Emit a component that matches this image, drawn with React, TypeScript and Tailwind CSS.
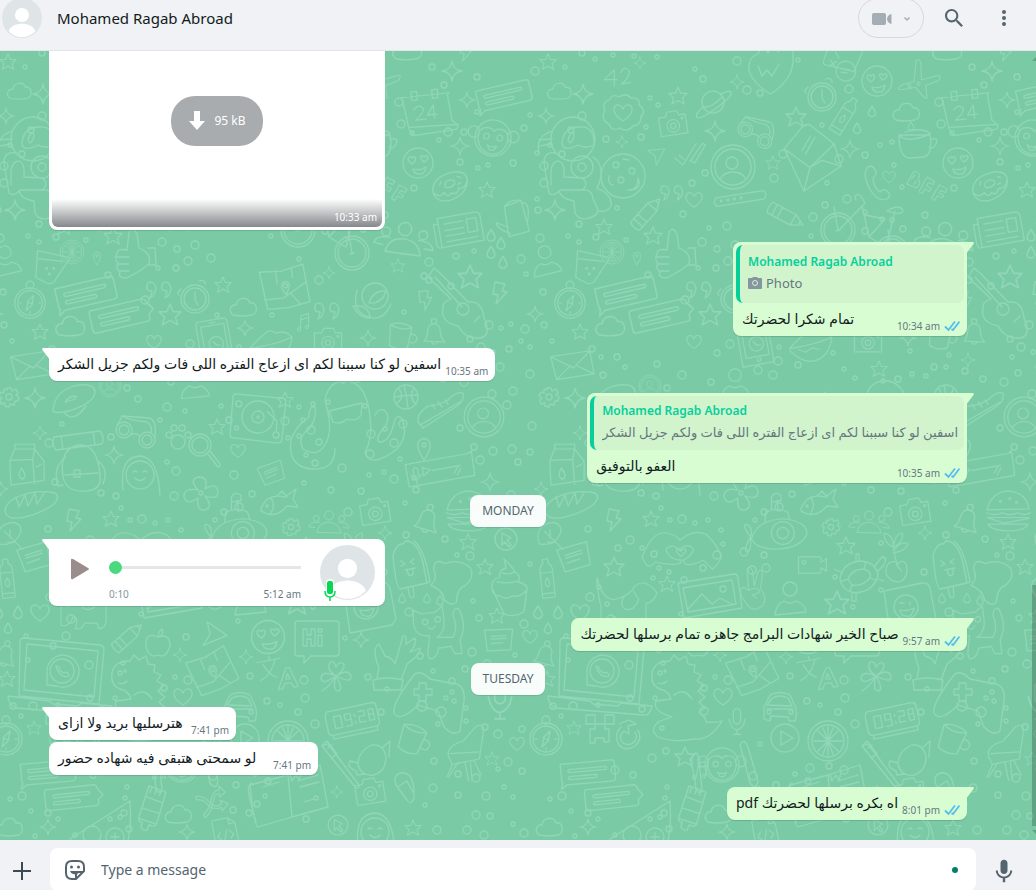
import { useId } from "react";
import type { ReactNode } from "react";
import clsx from "clsx";

const circle = (x: number, y: number, r: number) =>
  `M${x - r} ${y}a${r} ${r} 0 1 0 ${r * 2} 0a${r} ${r} 0 1 0 ${-r * 2} 0`;

const star = "M0 -10L3 -3L10 -3L5 2L7 9L0 5L-7 9L-5 2L-10 -3L-3 -3Z";
const heart = "M0 8C-14 -1 -9 -9 -4 -8C-1 -7 0 -4 0 -4C0 -4 1 -7 4 -8C9 -9 14 -1 0 8Z";

const shapes: Record<string, string> = {
  star,
  heart,
  sparkle: "M0 -10Q1 -1 10 0Q1 1 0 10Q-1 1 -10 0Q-1 -1 0 -10Z",
  cloud: "M-11 8C-17 3 -12 -3 -8 -2C-7 -10 4 -11 6 -4C13 -6 15 6 8 8Q-2 10 -11 8Z",
  drop: "M0 -5Q5 2 3 4Q0 7 -3 4Q-5 2 0 -5Z",
  bolt: "M-4 -11L6 -9L3 -2L8 -1L-3 11L-1 2L-6 1Z",
  bubble:
    "M-27 -10L24 -10Q27 -10 27 -7L27 8Q27 11 24 11L-22 11L-28 15L-26 9L-27 8ZM-19 -4L18 -4Q20 -3 18 -1L-19 -1Q-21 -3 -19 -4ZM-19 3L8 3Q10 5 8 6L-19 6Q-21 4 -19 3Z",
  bubbleRight:
    "M-27 -10L22 -10Q25 -9 25 -6L30 1L25 5L25 8Q25 11 22 11L-25 11Q-28 11 -28 8L-28 -7ZM-19 -4L16 -4Q18 -3 16 -1L-19 -1Q-21 -3 -19 -4ZM-19 3L6 3Q8 5 6 6L-19 6Q-21 4 -19 3Z",
  note: "M-16 -11L15 -12L13 11L-13 12L-16 -11M-9 -4L8 -5M-9 -1L8 -2M-9 4L4 3",
  smiley:
    circle(0, 0, 15) +
    "M-6 1C-13 -4 -9 -8 -6 -5C-3 -9 0 -4 -6 1ZM6 -1C0 -6 3 -9 6 -6C9 -10 13 -5 6 -1ZM-5 6Q2 8 8 4Q7 12 1 11Q-4 11 -5 6Z",
  calendar:
    "M-28 -17L22 -17L20 -15L22 12L28 18L26 22L-20 24L-24 16ZM-23 15L27 17M-18 -22H-12V-13H-18ZM4 -22H10V-13H4ZM-17 -3Q-12 -9 -7 -4Q-5 0 -16 8L-5 8M4 8V-6L-3 4H7",
  monkey:
    circle(0, 0, 19) +
    circle(-21, -4, 6) +
    circle(21, -4, 6) +
    circle(-7, -1, 3) +
    circle(7, -1, 3) +
    "M-15 5Q-18 -9 -8 -10Q-2 -11 0 -7Q2 -11 8 -10Q18 -9 15 5Q11 17 0 17Q-11 17 -15 5ZM-5 8Q0 11 5 8Q3 14 -2 13Z",
  astronaut:
    circle(0, -38, 22) +
    circle(9, -10, 11) +
    circle(9, -10, 4) +
    "M-11 -35Q-9 -49 5 -50Q22 -52 21 -32Q13 -28 5 -32Q-11 -24 -11 -35ZM-5 -37Q-2 -47 1 -43Q1 -37 -3 -34ZM-17 -24Q-29 -26 -29 -14L-24 16Q-20 20 -14 14Q-12 22 1 24L2 36Q6 44 16 41Q27 38 24 30L20 22Q19 12 10 13L-13 13M-22 8V-6Q-21 -16 -14 -16Q-8 -14 -9 0L9 1Q17 7 9 13M20 -20Q34 -10 24 11Q40 18 38 29Q34 36 25 34M-21 -46Q-38 -40 -34 -24M-21 -38L-34 -37M-22 -33L-34 -31",
  planet: circle(0, 0, 11) + "M-10 4Q-20 11 -17 14Q-13 17 8 3Q22 -6 18 -9Q15 -10 8 -7M-10 4Q-1 6 10 -5",
  ball:
    circle(0, 0, 22) +
    circle(-2, 4, 3) +
    circle(9, -5, 3) +
    circle(-7, -11, 3) +
    "M5 14Q15 15 15 2Q20 14 5 14ZM-14 0Q-16 8 -10 9M0 -17L6 -16",
  envelope: "M-26 -12L-5 -30Q2 -34 5 -29L24 -8L27 15L-14 33ZM-26 -12L-4 11L24 -8M-14 33L-4 11L9 6L27 15M-6 -3L6 -18M-9 -7L2 -20",
  glasses:
    circle(-13, 0, 8) +
    circle(10, 10, 8) +
    circle(-13, 0, 5) +
    circle(10, 10, 5) +
    "M-7 5Q-2 2 3 6M-20 -4L-15 -14L12 -12Q20 -10 18 7M-15 -14Q-9 -10 10 -8Q16 -4 14 3",
  userCircle: circle(0, 0, 22) + circle(0, 0, 18) + circle(-1, -4, 6) + "M-13 12Q-9 5 0 5Q9 5 13 12",
  user: circle(0, -11, 7) + "M-15 15Q-14 4 -6 1Q0 5 6 1Q15 4 16 12Z",
  people:
    circle(0, -10, 6) +
    circle(-17, -6, 4) +
    circle(17, -6, 4) +
    "M-16 12Q-14 -1 0 -1Q14 0 16 13ZM-19 6L-27 5Q-26 -2 -13 -1M19 6L27 7Q26 -1 13 -1",
  toggle: "M-25 -4H25Q30 0 25 5H-25Q-30 0 -25 -4Z" + circle(-20, 0, 1) + circle(-13, 0, 1) + circle(-6, 0, 1) + circle(1, 0, 1),
  pencil: "M-18 -6H8L19 0L8 6H-18Q-21 0 -18 -6ZM-13 -6V6M-7 -6V6M8 -6V6M15 -2V2",
  clock: circle(0, 0, 14) + circle(0, 0, 11) + "M0 -7V1L3 6M-14 -10Q-19 -6 -16 -4M4 -18Q10 -20 10 -15",
  bottle: "M-7 22V-8Q-7 -14 -3 -16V-21H3V-16Q7 -14 7 -8V22ZM-7 -6H7M-7 17H7M0 0Q5 7 0 10Q-5 7 0 0Z",
  plane: "M-19 14Q-20 9 -1 2L-2 -24Q0 -28 4 -23L8 -1L24 -8Q34 -13 29 -3L14 5L18 20Q16 23 2 9Q-18 16 -19 14Z" + circle(-6, 8, 2) + circle(5, 4, 2),
  cup: "M-18 -9Q-18 14 -7 14L7 13Q16 10 13 -9ZM-18 -9Q-14 -4 -3 -5Q12 -8 13 -11Q4 -17 -12 -12M14 -5Q22 -7 19 0Q16 6 12 3",
  donut: "M-18 1Q-15 -13 6 -13Q20 -12 18 -1Q14 12 -3 14Q-18 14 -18 1ZM-17 4Q-12 10 -7 5Q-5 12 0 7Q5 11 8 4Q15 6 18 -2M-5 0Q-6 -5 1 -6Q7 -5 5 -1Q0 3 -5 0ZM-10 -3L-8 -6M9 -8L12 -6M8 0L11 -1",
  handset: "M-10 -14Q-6 -18 -3 -14Q2 -8 -4 -4Q-4 5 3 10Q7 5 12 11Q14 14 10 17Q1 20 -6 9Q-15 -6 -10 -14Z",
  bff: "M-19 6L-11 -10Q0 -10 -5 -1Q1 5 -7 10ZM-13 -1L-9 -6M-10 6L-7 2M-3 15L6 -4L16 1L14 5L8 3L6 7L12 10L10 14L4 11L1 17ZM13 22L22 5L32 10L30 14L24 12L22 15L28 18L26 21L20 19L17 25Z",
  wheel: circle(0, 0, 17) + circle(0, 0, 14) + "M0 0L-4 -23M-2 1L2 0",
  bike: "M0 0L25 -26L21 -33Q13 -37 16 -29M22 -23L29 8L45 -10L25 -14M29 8L46 18L55 -18M47 -18Q60 -26 63 -18Q61 -13 47 -18Z",
  paper: "M-22 -14L19 -14Q23 -13 23 -9V17H-22ZM-22 -8H-27V14Q-26 18 -22 17M-16 -7H4M-16 0H4M-16 6H4M-16 12H17M8 -8H18V6H8Z",
  can: "M-10 -14L8 -19L14 14L-8 18ZM8 -16Q18 -18 13 4M-8 8L-20 2Q-21 8 -6 15M-10 -14Q-4 -22 8 -19",
  rocket: "M0 24Q-24 8 -21 -6Q-19 -14 -12 -16L-7 -26L-2 -17L4 -30L8 -18L19 -30Q27 -14 20 4Q13 17 0 24ZM-12 -4L-8 6L-3 0L2 6L9 -6",
  cards: "M-18 6Q-22 3 -13 -22L22 -17L16 8ZM-12 0L-5 7M-5 0L-12 7M-8 -10L-3 -4" + circle(7, 9, 11) + "M2 7H11M2 11H9",
  fortyTwo: "M-3 10V-8L-14 3H0M4 -5Q9 -14 14 -6Q13 2 5 8L15 6",
  rosette:
    "M-18 -3Q-22 -10 -14 -13Q-10 -20 -4 -16Q3 -21 8 -15Q17 -16 16 -8Q24 -3 18 4Q18 12 10 13Q4 20 -3 15Q-11 19 -14 11Q-23 7 -18 -3Z" +
    heart,
  camera: "M-15 -9H-7L-5 -14H6L8 -9H15V12H-15Z" + circle(0, 2, 7) + circle(0, 2, 3) + circle(11, -5, 1),
  checks: "M-17 3L-8 11L7 -13M-12 0L-7 5M1 6L5 9L17 -11M17 -11L14 -13L0 7",
  quotes: "M-10 -6Q-4 -9 -2 -1Q-3 7 -8 9Q-6 4 -6 2Q-14 2 -10 -6ZM5 -6Q11 -9 13 -1Q12 7 7 9Q9 4 9 2Q1 2 5 -6Z",
  thumb: "M-16 -4Q-16 -10 -6 -8L-4 -26Q0 -32 4 -24L6 -10Q19 -5 16 6L8 12L-6 20Q-16 20 -13 14Q-18 10 -15 6Q-19 0 -16 -4ZM-15 6H-4M-13 13H-4M-16 -1H-4M15 -10L22 -10L23 7L16 7",
  drink: "M-16 -16L20 -8L2 19Q-2 22 -6 20L-18 14ZM-16 -7L12 -4" + circle(-6, 4, 1) + circle(2, 4, 1) + circle(-3, 10, 1),
  citrus: circle(0, 0, 20) + circle(0, 0, 16) + "M0 -14V14M-14 0H14M-10 -10L10 10M10 -10L-10 10M-5 -13L5 13M5 -13L-5 13",
  pin: "M0 13Q-9 0 -5 -6Q0 -11 5 -6Q9 0 0 13Z" + circle(0, -2, 2),
  compass: circle(0, 0, 16) + circle(0, 0, 13) + circle(0, -19, 4) + "M-4 8L-2 -2L4 -8L2 2ZM-3 -1L3 1M-11 0H-9M9 0H11M0 9V11",
  guitar: "M-30 -36L-26 -42L-19 -36L8 -8Q22 -10 24 8Q32 26 20 28Q6 30 -2 16Q-20 12 -17 -2Q-18 -8 -9 -11L-32 -33ZM14 12L20 6M-25 -33L2 -3" + circle(3, -1, 6) + circle(-36, -34, 3) + circle(-31, -30, 3),
  rose: circle(2, -6, 13) + "M-16 -12Q-22 10 -4 15Q10 20 18 2M-20 4Q-4 2 -3 16Q-14 16 -20 4ZM-4 1Q0 -12 13 -11Q9 2 -4 1Z",
  map: "M-22 -20L0 -18L22 -22L24 16L2 19L-19 18ZM-21 8L-2 9L23 -4M6 5L14 17M-6 -19L-6 -6M10 -19L10 -10" + circle(2, -3, 2) + "M2 6Q-5 -2 0 -7Q6 -8 6 -3Z",
  bell: "M-11 9Q-7 5 -7 -3Q-6 -10 0 -10Q7 -10 7 -2Q7 5 12 10ZM-3 10Q0 15 4 10" + circle(0, -13, 3),
  phone: "M-17 -25H13Q16 -24 16 -21V25H-19V-22ZM-14 -19H12V16H-14ZM-4 -22H3" + circle(0, 2, 8) + circle(0, 20, 2) + "M-3 -1Q0 5 4 4",
  mug: "M-12 -10L-10 13Q0 18 10 13L12 -10Q0 -16 -12 -10ZM-12 -10Q0 -4 12 -10M12 -3Q20 -3 19 3Q17 9 11 6",
  lips: "M-25 4Q-12 -10 -5 -15Q0 -17 4 -13Q15 -17 22 -9Q10 -2 -25 4ZM-25 6Q-5 26 12 13Q20 6 22 -8M-15 5L-7 8L0 3L8 5",
  letter: "M-26 -12L18 -14L20 12L-22 14ZM-26 -12L-2 3L18 -14M-22 14L-6 1M20 12L2 1",
  gear: "M-2 -9H2L3 -6L7 -8L9 -4L7 -2L10 0L9 4L6 4L5 8L1 7L0 10L-4 9L-4 6L-8 7L-9 3L-7 1L-10 -1L-8 -5L-5 -4L-5 -8L-2 -7Z" + circle(0, 0, 3),
  disc: "M-20 11Q-19 -8 1 -14Q20 -18 22 -9Q22 3 -4 11Q-17 14 -20 11ZM-8 2Q-4 -4 3 -4Q5 -1 -8 2ZM-9 12Q0 24 13 6",
  backpack: "M-17 10Q-21 -20 0 -22Q18 -22 20 8Q22 22 8 24Q-14 26 -17 10ZM-15 8L18 6M-14 -10Q-28 0 -22 19L-17 18M18 -6Q29 2 23 17M-26 -30L20 -36Q25 -29 22 -23L-24 -17Q-29 -23 -26 -30M-19 -31L-17 -18M13 -35L15 -22M-6 3V10H0V3Z",
  milk: "M-19 -8L-14 -20H7L17 -7V13L-18 18ZM-19 -8L5 -9L7 17M5 -9L7 -20M-14 -20V-25H7V-20M-7 0Q0 9 -6 12Q-12 9 -7 0ZM9 -1L14 -4",
  girl: "M-17 15Q-21 -18 0 -19Q18 -18 20 20" + circle(0, 0, 14) + "M-7 -3Q-5 -5 -3 -3M3 -3Q5 -5 7 -3M-5 3Q0 8 5 3",
  magnifier: circle(0, 0, 11) + circle(0, 0, 8) + "M7 8L18 22Q21 22 20 19L10 6",
  paw: circle(0, 4, 7) + circle(-9, -3, 3) + circle(-4, -10, 3) + circle(4, -10, 3) + circle(10, -3, 3),
  record: "M-24 -22L24 -20Q27 -20 27 -17L25 22Q24 25 21 25L-25 22Q-27 22 -27 19L-26 -20Z" + circle(0, 0, 16) + circle(0, 0, 6) + circle(0, 0, 1) + "M9 -6L19 3V14" + circle(19, 17, 3) + circle(-20, -12, 3) + circle(-21, 12, 2),
  octopus: "M-20 -24Q-17 -46 4 -44Q22 -40 25 -8Q28 12 20 28Q26 44 52 24Q64 10 57 -6Q52 -12 49 -2Q44 18 34 17Q30 12 40 2Q46 -8 40 -14Q34 -18 30 -10M-20 -24Q-12 2 -18 16Q-26 34 -42 24Q-48 12 -36 4M-36 4Q-28 -6 -30 -18Q-36 -20 -36 -8Q-58 8 -54 28Q-50 44 -30 44Q-10 44 -10 24M-16 -14L17 -22L16 -10Q12 -3 2 -6Q-4 0 -12 -3Z",
  basketball: circle(0, 0, 12) + "M-12 0Q0 -2 12 -2M-2 -12Q1 0 2 12M-8 -9Q0 0 -10 7M8 -9Q2 0 10 7",
  shoe: "M-22 12Q-24 4 -12 -4Q-2 -4 8 -10Q16 -19 23 -17Q25 -10 17 -4L-17 18ZM-20 15L20 -8M-8 -6L-5 -1M-2 -8L2 -3M5 -10L8 -6",
  voice: "M-35 -12H32L36 -14L35 12H-33Q-36 12 -35 9ZM-8 -1H22M14 6L19 0M17 8L22 2M-18 -6L-10 -2L-18 3ZM-28 -5Q-25 -9 -23 -5V1Q-25 4 -28 1ZM-31 0Q-26 10 -20 1M-26 6V10",
  bread: "M-26 6Q-26 -2 -14 -8Q6 -16 24 -12Q30 -8 22 0Q0 14 -18 13Q-25 12 -26 6ZM-15 -8L-12 2L-6 -10L-3 1L4 -12L6 -1L13 -12",
  flower: "M-3 -3Q-13 -14 -2 -16Q8 -16 4 -4Q16 -12 17 0Q16 7 4 3Q13 14 4 17Q-5 18 -3 5Q-14 13 -17 4Q-17 -6 -3 -3Z" + circle(0, 0, 2),
  fish: "M-18 4Q-12 -12 6 -8L17 -16L14 -6L19 2L8 1Q-4 15 -18 6ZM-8 -7Q-3 0 -8 8M-2 -9L3 -14L8 -8" + circle(-12, 1, 1),
  leaf: "M-12 10Q-18 -12 4 -14Q18 -10 8 4Q2 12 -12 10ZM-6 -4L14 16M0 3V-6M6 8L-3 8",
  submarine: "M-30 6Q-24 -14 4 -15Q30 -12 28 2Q20 17 -6 17Q-26 16 -30 6ZM-16 -12L-15 -22Q-2 -28 8 -22L10 -15M-9 -25V-38Q-6 -44 1 -40V-34H-3L-2 -25M-9 -33H-2M-31 4Q-40 -8 -36 -9Q-30 -9 -30 2Q-40 20 -34 20Q-30 18 -31 6" + circle(3, 0, 12) + circle(3, 0, 6),
  dog: "M-40 10Q-46 -18 -44 -22Q-40 0 -26 2Q-8 -2 -2 -14Q10 -22 22 -6Q20 4 10 6L10 18Q12 34 2 34L0 28H-14Q-16 36 -24 34Q-20 22 -26 20Q-32 34 -40 30ZM-14 -2Q-20 6 -14 12Q-4 16 2 2L-4 -8",
  apple: "M0 -8Q-13 -14 -12 2Q-8 14 0 10Q8 14 12 1Q12 -12 0 -8ZM0 -8Q0 -13 4 -16Q7 -10 0 -8",
  arrow: "M-8 -12L14 -2L-8 12L-3 0Z",
  hi: "M-19 -17H19Q22 -17 22 -14V15Q22 18 19 18H-6L-13 25V18H-19Q-22 18 -22 15V-14Q-22 -17 -19 -17ZM-14 -9H-10V-3H-6V-9H-2V8H-6V1H-10V8H-14ZM1 -3H5V8H1ZM1 -9H5V-6H1Z",
  cat: "M-24 -10L-24 -24L-15 -20L0 -22L8 -29L10 -14Q12 0 2 6L20 6Q26 -6 20 -18Q20 -28 26 -26Q36 -8 28 8L30 24L22 24L18 16L4 18Q2 30 -6 30L-8 24L-6 4Q-22 6 -24 -10Z" + circle(-11, -11, 3) + circle(3, -14, 3) + "M-8 -6Q-4 0 0 -7",
  icecream: "M-17 -12Q-13 -24 -7 -23L-4 -26Q8 -26 13 -4L17 16L-10 22Q-14 22 -17 -12ZM4 -26Q14 -20 20 15L17 16M-2 21L0 30Q4 32 4 28L3 19M-9 -6L-5 -3L-9 -1M4 -8L0 -5L4 -3M-5 3L5 1M-3 3Q-1 12 3 7V2",
  translate: "M-18 -8L8 -13M-5 -15L-4 -11M2 -11Q-2 6 -14 12M-11 -6Q-4 6 4 8M6 22L14 -2L18 -3L28 18L23 19L20 14L13 15L11 21ZM14 10H19L16 4Z",
  clover: "M0 0Q-10 -6 -6 -14Q-2 -16 0 -9Q4 -16 8 -12Q9 -6 0 0Q12 -8 15 0Q16 8 0 0Q8 14 2 15Q-4 14 0 0Q-14 10 -15 2Q-14 -6 0 0M0 0Q-6 10 -14 15",
  hand: "M-16 18L-14 8Q-22 -12 -14 -16L-8 -4Q0 -2 2 4L10 -24Q14 -26 13 -16L22 -22Q24 -16 17 -8L27 -12Q28 -6 14 4L8 20M-20 20Q-6 16 10 20L8 30H-19Z",
  laptop: "M-38 -34L38 -27Q42 -26 42 -22L37 32L-43 24L-42 -30Q-42 -34 -38 -34ZM-35 -28L36 -21L32 25L-38 18ZM-54 24L-12 29L-9 32L16 34L19 31L50 34Q48 44 42 43L-46 36Q-54 32 -54 24Z" + circle(0, -1, 12) + "M-15 13L-15 -1A16 16 0 1 1 -5 14ZM-6 -6Q-2 7 7 4Q6 -1 2 1Q-3 -1 -3 -5Z",
  dino: "M-28 -24Q-26 -36 -10 -36L-6 -42L-1 -37L6 -41L8 -33L15 -32L14 -25L21 -22L17 -16L24 -12L18 -6L25 0L19 5L25 11L19 15L25 21L26 25Q36 26 42 24Q30 44 14 42Q-6 46 -22 40Q-32 32 -20 24L-8 20Q-28 14 -24 4L-9 2Q-11 -6 -20 -8Q-30 -12 -28 -24ZM-6 -2Q4 -10 12 2M-22 -14Q-16 -12 -13 -16" + circle(-20, -24, 2) + circle(-15, -26, 1),
  car: "M-16 14V2L-10 -10Q0 -15 10 -10L15 1Q18 8 15 16H9L8 12L-9 11L-10 16ZM-13 0L-8 -7Q0 -11 8 -7L12 1ZM-13 4H13" + circle(-11, 7, 2) + circle(11, 7, 2),
  mic: "M-4 -10Q0 -15 4 -10V2Q0 7 -4 2ZM-9 -1Q-6 11 0 11Q7 10 9 -1M0 11V16M-4 16H4",
  alarm: "M-24 -11L22 -11Q26 -11 26 -7V9Q26 13 22 13H-22Q-26 13 -26 9V-7ZM-22 13V17H23V13M-18 -5H-11V7H-18ZM-7 -5H-1V1H-7V-5M-1 1V7H-7M7 -5H13V0H7V6H13M17 -5H22V6H17ZM17 0H22M3 -3V-1M3 4V6",
  pad: "M-16 -22Q-10 -28 0 -18L20 -14Q36 -14 34 4L30 34Q24 40 14 30L8 14L-12 8Q-30 26 -36 16Q-38 6 -16 -22ZM-11 -14H-4V-8H2V-2H-4V4H-11V-2H-16V-8H-11Z" + circle(-8, 9, 5) + circle(11, 15, 5) + circle(16, 1, 2) + circle(22, -5, 2) + circle(24, 4, 2),
  play: circle(0, 0, 14) + "M-4 -7L8 0L-4 7Z",
  chair: "M-18 8Q-22 -4 -2 -10L12 -26Q22 -32 20 -18L16 10L-14 16ZM-16 4L16 2M-14 16L-20 30M-8 14L-18 30M0 14L4 34M6 14L8 34M10 12L18 28",
  creeper: "M-14 -14H-5V-5H-14ZM5 -14H14V-5H5ZM-5 -5H5V0H9V13H4V9H-5V14H-10V0H-5Z",
  refresh: "M-7 -10Q-15 -2 -9 8Q-2 15 7 9Q15 2 10 -7M-9 -13L1 -17L8 -13L0 -11L1 -3L-4 -6Q-11 0 -5 6Q2 10 7 4Q10 0 7 -5",
  arms: "M-27 14Q-34 -10 -26 -12Q-22 -10 -22 6L-20 24Q-26 34 -27 14ZM18 -20Q22 -28 26 -18L36 16Q34 26 28 18Z",
  turnip: "M-14 8Q-14 -6 0 -12Q12 -13 14 0Q14 14 2 18Q-10 20 -14 8ZM-14 6L-22 4Q-26 10 -16 14L-15 18L-8 17M10 -9L18 -16L17 0",
  brush: "M-16 -22L18 20Q22 20 21 17L-10 -24ZM-16 -22L-11 -27L-1 -14L-7 -10M-10 -20L-6 -23",
  book: "M-40 -14L-2 -24L2 18L-32 28Q-36 28 -40 -14ZM-2 -24L30 -34L38 8L2 18M-38 -16Q-44 -14 -40 0L-34 24M-27 -12L-11 -17M8 -18L28 -24M10 -12L29 -17M14 3L24 0M0 -24L2 -18L6 -24L9 -19L11 -26",
  flipflop: "M-9 -14Q-4 -20 4 -15Q10 -8 9 8Q6 16 2 10L-7 -2Q-12 -8 -9 -14ZM-6 -4L2 -9L8 2",
  music: "M-3 7V-9L7 -12V4M-3 -4L7 -7" + circle(-5, 8, 2) + circle(5, 5, 2),
  shuffle: "M-17 -7Q-8 -7 -2 4Q4 10 10 6L9 2L17 7L9 14V10Q-2 12 -7 2Q-12 -4 -17 -3ZM-12 14Q-4 10 0 -3Q4 -10 10 -10V-14L16 -6L9 -2V-6Q4 -6 2 0Q-4 15 -11 18Z",
  tube: "M-10 -21L8 -20L9 13Q8 17 2 16V21Q0 24 -5 21V16Q-10 16 -10 12ZM-10 -10L8 -9M-10 2H8M-7 -21V-15M-2 -21V-15M3 -20V-15M-9 13H8",
  pizza: "M-28 14L32 -24Q34 4 28 24L-20 24Q-30 20 -28 14Z" + circle(-6, 10, 9) + circle(17, 12, 9) + circle(22, -8, 2) + circle(12, -6, 2) + "M13 12L21 12M17 8V16",
  file: "M-12 -15H6L13 -8V16H-13ZM6 -15V-8H13M-5 -1L-9 4L-5 8M5 -1L9 4L5 8M2 -2L-2 9",
  cursor: circle(0, 0, 11) + "M-4 -6L5 -1L1 1L5 6L3 8L-1 3L-4 6Z",
  burger: "M-22 2Q-18 -16 0 -18Q20 -16 22 1ZM-23 5Q-14 9 -6 5Q2 9 10 5Q18 9 23 5M-22 10H22M-22 10L-4 16L22 11M-21 17H21Q18 24 0 24Q-17 24 -21 17Z" + circle(-8, -7, 1) + circle(2, -10, 1) + circle(9, -6, 1),
  cupcake: "M-18 0L-6 26Q4 30 14 24L17 0M-18 0Q-20 -8 -10 -11Q-12 -18 -4 -20L-6 -29Q2 -22 5 -16Q12 -12 8 -6Q18 -4 17 2Q10 10 2 8Q-4 12 -10 8Q-18 8 -18 0ZM-13 -6Q0 -4 8 -7M-8 -15Q0 -13 4 -16",
  puddle: "M-20 -8Q-22 -20 -10 -16Q4 -24 16 -16Q22 -8 14 2Q6 6 8 20Q4 26 -4 20Q-8 10 -20 8Q-14 0 -20 -8Z",
  hands: "M-42 4Q-30 -26 -14 -22Q-4 -20 0 -14Q16 -28 30 -20Q42 -8 46 4Q42 14 36 18L26 8Q4 18 4 8Q22 -4 10 -8Q0 -8 0 -2Q-8 -12 -16 -4Q-12 8 2 8Q2 16 -28 10Q-36 22 -42 4ZM1 4Q-7 -3 -2 -5Q1 -5 1 -2Q5 -7 7 -3Z",
  picture: "M-32 -17L24 -26Q28 -26 28 -22L32 8L-26 18ZM-27 -12L22 -20L26 4L-22 12ZM-22 9L-8 -6L2 4L10 -2L22 4" + circle(13, -11, 3),
  peace: "M-14 10Q-22 -4 -14 -6L-8 -2L-10 -28Q-6 -34 -3 -26L-1 -8L4 -26Q10 -30 9 -20L7 -4Q16 8 10 16Q0 26 -8 18ZM-8 -2Q4 -8 6 0Q0 4 -4 3L2 8",
  video: "M-15 -9H8Q10 -9 10 -6V-3L16 -7V7L10 3V6Q10 9 8 9H-15Z" + circle(-9, -3, 2),
  turtle: "M-20 4Q-18 -12 0 -14Q16 -13 18 0Q14 16 -4 18Q-18 16 -20 4ZM-12 4Q-8 -6 4 -6Q12 -4 10 3Q2 12 -8 10ZM-19 -3L-26 -6M14 -8L22 -18Q28 -18 24 -10L18 -4M18 4L24 6M-4 18V26H-8V17M-12 4L-19 6M4 -6L6 -13M10 3L17 6M-8 10L-10 16M-4 -13V-21H-1V-14",
  plant: "M0 2Q-14 0 -12 16Q-6 26 4 24Q14 18 10 4Q4 -2 0 6L-4 -14M-4 -14Q-16 -20 -14 -30Q-4 -28 -4 -14Q-2 -30 6 -30Q8 -20 -4 -14M-4 -10Q4 -22 12 -18Q10 -10 -4 -8M0 6L5 12",
  sticker: "M-24 -16L14 -24Q20 -25 22 -19L28 12L24 18L-18 26Z" + circle(-2, 0, 12) + "M-8 -4H-4M2 -5V-2M-8 3Q-2 5 6 1Q4 11 -2 9Q-7 9 -8 3Z",
};

type Doodle = [kind: string, x: number, y: number, scale?: number, angle?: number];

const doodles: Doodle[] = [
  ["star", 8, 62, 0.8], ["star", 138, 96, 0.9], ["star", 487, 190, 0.8], ["star", 470, 277, 1.2], ["star", 398, 266, 0.7],
  ["star", 64, 227, 0.8], ["star", 113, 236, 0.9], ["star", 40, 332, 0.8], ["star", 256, 117], ["star", 233, 163, 0.7],
  ["star", 170, 315, 1.1], ["star", 223, 285, 0.8], ["star", 285, 400, 0.8], ["star", 217, 427, 0.8], ["star", 339, 369, 0.8],
  ["star", 111, 519, 0.8], ["star", 7, 679, 0.8], ["star", 34, 728, 0.7], ["star", 468, 542, 0.8], ["star", 485, 567, 0.8],
  ["star", 497, 616, 0.8], ["star", 492, 759, 0.7], ["star", 74, 567], ["star", 127, 584, 0.8], ["star", 145, 757],
  ["star", 306, 546, 0.9], ["star", 297, 603, 1.2], ["star", 413, 828, 0.8],
  ["sparkle", 452, 71], ["sparkle", 467, 100, 0.8], ["sparkle", 460, 146, 0.9], ["sparkle", 43, 94], ["sparkle", 546, 116, 0.8],
  ["sparkle", 15, 210], ["sparkle", 82, 142, 0.6], ["sparkle", 100, 63, 0.6], ["sparkle", 535, 314, 0.8], ["sparkle", 197, 82, 0.7],
  ["sparkle", 175, 131], ["sparkle", 310, 149, 0.9], ["sparkle", 329, 273, 0.6], ["sparkle", 245, 328, 0.8], ["sparkle", 368, 338, 0.8],
  ["sparkle", 35, 398], ["sparkle", 40, 433, 0.7], ["sparkle", 114, 455, 0.9], ["sparkle", 490, 482, 0.9], ["sparkle", 385, 533, 0.7],
  ["sparkle", 361, 640, 0.8], ["sparkle", 246, 657, 0.7], ["sparkle", 180, 655, 0.7], ["sparkle", 48, 827, 0.8], ["sparkle", 337, 792, 0.6],
  ["sparkle", 187, 832, 0.8], ["sparkle", 428, 360, 0.7], ["sparkle", 541, 489, 0.7],
  ["cloud", 20, 91, 0.9], ["cloud", 71, 326, 1.1], ["cloud", 244, 307], ["cloud", 367, 112], ["cloud", 179, 814], ["cloud", 550, 827],
  ["cloud", 408, 50, 1.1], ["bolt", 465, 52, 0.8], ["heart", 349, 177, 0.7], ["heart", 154, 342, 0.8], ["heart", 238, 451, 0.8],
  ["heart", 40, 613], ["heart", 183, 697], ["heart", 530, 637, 0.8], ["heart", 517, 744, 0.8], ["heart", 154, 200, 0.9],
  ["drop", 332, 111], ["drop", 317, 128], ["drop", 371, 126, 0.8], ["drop", 491, 235, 1.1], ["drop", 501, 243, 1.1], ["drop", 491, 252, 1.1],
  ["drop", 503, 262, 1.1], ["drop", 538, 612, 1.2], ["drop", 558, 612, 1.2], ["drop", 548, 628], ["drop", 402, 598, 0.9], ["drop", 427, 598, 0.9], ["drop", 440, 600, 0.9],
  ["bolt", 499, 293], ["bolt", 425, 300, 0.9, -15], ["bolt", 73, 520], ["bubble", 504, 95, 1, -13], ["bubble", 86, 293, 1.1, -13],
  ["bubbleRight", 121, 315, 1.1, -13], ["bubble", 48, 772, 1, -5], ["bubbleRight", 73, 797, 1, -6], ["note", 35, 557, 1, -14], ["note", 499, 640, 0.9], ["note", 272, 473, 0.8, -18],
  ["calendar", 430, 111, 0.95, -6], ["monkey", 493, 138, 0.95, 8], ["astronaut", 33, 177], ["planet", 173, 102, 1, -5], ["ball", 83, 176],
  ["envelope", 272, 156, 1, -10], ["glasses", 217, 131, 0.9, 8], ["userCircle", 193, 167], ["toggle", 200, 198, 0.95, -9],
  ["pencil", 246, 216, 1, 28], ["pencil", 107, 213, 1, -48], ["clock", 282, 97], ["bottle", 305, 115, 0.9, 32], ["smiley", 337, 81],
  ["smiley", 418, 163], ["plane", 375, 80, 0.8, 8], ["cup", 377, 144], ["donut", 450, 186, 1, -12], ["handset", 337, 182],
  ["bff", 382, 180, 0.8, 3], ["wheel", 298, 230], ["wheel", 352, 253], ["bike", 300, 229], ["paper", 460, 228, 0.95, -10],
  ["people", 404, 240, 1.1, 6], ["can", 515, 219, 0.95, -5], ["rocket", 230, 70], ["cards", 301, 62, 0.9, 10], ["fortyTwo", 77, 77, 0.9],
  ["rosette", 83, 113], ["camera", 133, 124, 0.9, -9], ["checks", 150, 155, 0.9], ["quotes", 131, 192, 0.9], ["arrow", 117, 155, 0.7, -30],
  ["thumb", 133, 258], ["drink", 52, 265, 0.9], ["citrus", 72, 252, 0.6], ["pin", 97, 257, 0.6], ["compass", 30, 303, 0.95],
  ["user", 546, 262, 0.9, -8], ["guitar", 460, 310], ["rose", 373, 302], ["quotes", 158, 289], ["quotes", 326, 310], ["clock", 195, 299],
  ["map", 284, 289, 1, -8], ["bell", 434, 333, 0.9], ["phone", 216, 342, 0.9, -10], ["camera", 328, 341, 0.9], ["mug", 400, 335, 0.9, 8],
  ["lips", 272, 345, 0.9], ["letter", 35, 365, 0.9, -6], ["gear", 9, 397], ["disc", 73, 400], ["userCircle", 110, 386, 0.5], ["glasses", 137, 430],
  ["backpack", 80, 467], ["milk", 28, 468, 0.95], ["girl", 140, 475], ["magnifier", 200, 445], ["paw", 178, 438], ["record", 258, 417, 1, 3],
  ["octopus", 345, 425], ["basketball", 406, 397], ["shoe", 440, 410], ["userCircle", 484, 417, 0.9], ["pin", 424, 447], ["voice", 440, 470, 0.95, -10],
  ["user", 195, 385, 0.9], ["music", 303, 323, 0.8], ["bread", 31, 505], ["flower", 201, 493], ["fish", 279, 505], ["gear", 291, 527, 0.9],
  ["people", 329, 523, 0.75], ["camera", 375, 512, 0.95, -9], ["leaf", 550, 535, 0.9], ["submarine", 240, 533, 0.95], ["bottle", 547, 578, 0.9, -6],
  ["dog", 97, 598, 0.9], ["pencil", 128, 637, 0.95, -42], ["apple", 158, 645], ["arrow", 213, 635, 1, 10], ["smiley", 268, 637, 1.1],
  ["hi", 317, 638], ["cat", 435, 632, 0.9], ["icecream", 410, 567], ["map", 212, 673, 0.95, -22], ["translate", 273, 670, 0.9], ["clover", 336, 676],
  ["hand", 393, 660], ["laptop", 62, 672], ["dino", 140, 697], ["car", 240, 705], ["mic", 197, 720, 0.9], ["alarm", 352, 718, 1, -12],
  ["pad", 430, 697], ["play", 245, 738], ["citrus", 288, 741], ["compass", 546, 739], ["mug", 412, 738, 1, 20], ["chair", 465, 750, 0.9],
  ["creeper", 60, 729], ["refresh", 88, 737], ["monkey", 182, 765, 0.9], ["arms", 182, 765], ["turnip", 372, 757], ["brush", 338, 768],
  ["book", 290, 799], ["camera", 370, 792, 0.95, -9], ["flipflop", 405, 790], ["music", 160, 771, 0.9, 10], ["shuffle", 212, 800, 0.9, -10],
  ["tube", 152, 809, 1, 18], ["pizza", 98, 825], ["file", 225, 832, 0.9, -12], ["cursor", 338, 825, 0.9], ["girl", 375, 832], ["burger", 468, 508, 0.95],
  ["bell", 427, 520, 1, 14], ["cursor", 506, 539], ["cupcake", 510, 588], ["puddle", 452, 581, 1, 10], ["hands", 140, 553, 0.9],
  ["picture", 170, 600], ["peace", 215, 592, 0.8], ["user", 250, 600], ["video", 272, 565, 0.9], ["turtle", 320, 575], ["plant", 357, 560, 0.9],
  ["sticker", 368, 607], ["bell", 545, 655, 0.9, 12], ["mic", 500, 698, 1.3],
];

const smallKinds = ["star", "sparkle", "heart", "drop", "quotes"];

// Small rings fill the gaps between the doodles
function scatterRings() {
  const rings: [number, number, number][] = [];
  let seed = 17;
  const next = () => {
    seed = (seed * 16807) % 2147483647;
    return seed / 2147483647;
  };
  const gap = (a: number, b: number) => Math.min(Math.abs(a - b), 540 - Math.abs(a - b));
  for (let i = 0; i < 9000 && rings.length < 340; i++) {
    const x = Math.round(next() * 540);
    const y = Math.round(52 + next() * 786);
    const r = 2 + Math.floor(next() * 3);
    const clear =
      doodles.every(([kind, dx, dy, s = 1]) => Math.hypot(gap(x, dx), y - dy) > (smallKinds.includes(kind) ? 12 : 22) * s + r) &&
      rings.every(([rx, ry, rr]) => Math.hypot(gap(x, rx), y - ry) > r + rr + 6);
    if (clear) rings.push([x, y, r]);
  }
  return rings;
}

const rings = scatterRings();

function Doodles() {
  return (
    <g fill="none" stroke="#91d6b6" strokeWidth="1.3" strokeLinejoin="round" strokeLinecap="round">
      {doodles.map(([kind, x, y, s = 1, a = 0], i) => (
        <path key={i} d={shapes[kind]} transform={`translate(${x} ${y}) rotate(${a}) scale(${s})`} />
      ))}
      {rings.map(([x, y, r], i) => (
        <circle key={i} cx={x} cy={y} r={r} />
      ))}
    </g>
  );
}

function Wallpaper() {
  const id = useId();
  return (
    <svg className="absolute inset-0 h-full w-full" aria-hidden="true">
      <defs>
        <pattern id={id} y="-51" width="540" height="891" patternUnits="userSpaceOnUse">
          <Doodles />
          <g transform="translate(-540 0)">
            <Doodles />
          </g>
          <g transform="translate(540 0)">
            <Doodles />
          </g>
        </pattern>
      </defs>
      <rect width="100%" height="100%" fill={`url(#${id})`} />
    </svg>
  );
}

function Avatar({ className }: { className: string }) {
  return (
    <svg viewBox="0 0 212 212" className={className} aria-hidden="true">
      <circle cx="106" cy="106" r="106" fill="#dfe5e7" />
      <circle cx="106" cy="90" r="37" fill="#fff" />
      <path fill="#fff" d="M35 175c12-25 38-38 71-38s59 13 71 38c-17 20-42 32-71 32s-54-12-71-32z" />
    </svg>
  );
}

function Ticks() {
  return (
    <svg viewBox="0 0 16 12" className="h-3 w-4 shrink-0" fill="none" stroke="#53bdeb" strokeWidth="1.8" aria-label="Read">
      <path d="M1 6.500L4.500 10L11 1.500M7.500 9L9 10L15.500 1.500" />
    </svg>
  );
}

type BubbleProps = {
  out?: boolean;
  tail?: boolean;
  className?: string;
  children: ReactNode;
};

function Bubble({ out, tail, className, children }: BubbleProps) {
  return (
    <div
      className={clsx(
        "relative max-w-full shrink-0 rounded-lg shadow-[0_1px_1px_rgba(11,20,26,0.15)]",
        out ? "self-end bg-[#d9fdd3]" : "self-start bg-white",
        tail && (out ? "rounded-tr-none" : "rounded-tl-none"),
        className
      )}
    >
      {tail && (
        <svg
          viewBox="0 0 8 12"
          className={clsx("absolute top-0 h-3 w-2", out ? "-right-[7px] text-[#d9fdd3]" : "-left-[7px] -scale-x-100 text-white")}
          aria-hidden="true"
        >
          <path fill="currentColor" d="M0 0h6.500c1.300 0 1.700 1 1 2L1 10.500V12H0z" />
        </svg>
      )}
      {children}
    </div>
  );
}

type LineProps = { text: string; time: string; read?: boolean };

function Line({ text, time, read }: LineProps) {
  return (
    <div className="flex items-end justify-between gap-1 pr-[7px] pb-0.5 pl-[9px]">
      <p dir="rtl" className="pt-1.5 pb-1.5 text-sm leading-[19px] whitespace-nowrap text-[#111b21]">
        {text}
      </p>
      <Stamp time={time} read={read} />
    </div>
  );
}

function Stamp({ time, read }: { time: string; read?: boolean }) {
  return (
    <span className="flex shrink-0 items-center gap-1 text-[10px] leading-4 text-[#667781]">
      <time>{time}</time>
      {read && <Ticks />}
    </span>
  );
}

function Quote({ className, children }: { className: string; children: ReactNode }) {
  return (
    <blockquote className={clsx("overflow-hidden rounded-[7px] border-l-4 border-[#06cf9c] bg-[#d1f4cc] pr-1.5 pl-2", className)}>
      <cite className="block text-xs leading-5 font-semibold text-[#06cf9c] not-italic">Mohamed Ragab Abroad</cite>
      <div className="text-[13px] leading-[22px] text-[#667781]">{children}</div>
    </blockquote>
  );
}

function Day({ children }: { children: string }) {
  return (
    <div className="mt-3 shrink-0 self-center rounded-lg bg-white/95 px-3 py-1.5 text-xs leading-5 text-[#54656f] shadow-[0_1px_1px_rgba(11,20,26,0.13)]">
      {children}
    </div>
  );
}

function Header() {
  return (
    <header className="flex h-[51px] shrink-0 items-center overflow-hidden border-b border-[#e3e5e9] bg-[#f0f2f5] pr-5 pb-3.5 pl-0.5">
      <Avatar className="h-10 w-10 shrink-0" />
      <h1 className="ml-[15px] flex-1 text-[15px] text-[#111b21]">Mohamed Ragab Abroad</h1>
      <button
        type="button"
        aria-label="Video call"
        className="flex h-10 w-[66px] items-center justify-center gap-[11px] rounded-full border border-[#d5d8dc] pt-0.5 text-[#a3adb3]"
      >
        <svg viewBox="0 0 20 12" className="h-3 w-5" fill="currentColor" aria-hidden="true">
          <rect width="14" height="12" rx="2" />
          <path d="M15 6c0-2 1.500-4.500 4.500-5v10C16.500 10.500 15 8 15 6z" />
        </svg>
        <svg viewBox="0 0 8 6" className="h-1.5 w-2" fill="none" stroke="currentColor" strokeWidth="1.500" aria-hidden="true">
          <path d="M1.500 1.500L4 4l2.500-2.500" />
        </svg>
      </button>
      <button type="button" aria-label="Search" className="ml-[18px] text-[#54656f]">
        <svg viewBox="0 0 24 24" className="h-6 w-6" fill="currentColor" aria-hidden="true">
          <path d="M15.900 14.300H15l-.3-.3c1-1.100 1.600-2.700 1.600-4.300 0-3.700-3-6.700-6.700-6.700S3 6 3 9.700s3 6.700 6.700 6.700c1.600 0 3.200-.6 4.300-1.600l.3.3v.8l5.100 5.100 1.500-1.500-5-5.200zm-6.200 0c-2.600 0-4.600-2.100-4.600-4.600s2.100-4.600 4.600-4.600 4.600 2.100 4.600 4.600-2 4.600-4.600 4.600z" />
        </svg>
      </button>
      <button type="button" aria-label="Menu" className="ml-[26px] text-[#54656f]">
        <svg viewBox="0 0 24 24" className="h-6 w-6" fill="currentColor" aria-hidden="true">
          <circle cx="12" cy="6" r="2" />
          <circle cx="12" cy="12" r="2" />
          <circle cx="12" cy="18" r="2" />
        </svg>
      </button>
    </header>
  );
}

function PhotoMessage() {
  return (
    <Bubble className="w-[336px] p-[3px]">
      <div className="relative flex h-[250px] items-center justify-center overflow-hidden rounded-md">
        <button
          type="button"
          className="mt-[38px] flex h-[50px] w-[92px] items-center justify-center gap-2 rounded-3xl bg-[#a8acaf] text-xs text-white"
        >
          <svg viewBox="0 0 18 20" className="h-5 w-[18px]" fill="currentColor" aria-hidden="true">
            <path d="M6 0h6v10h5l-8 9-8-9h5z" />
          </svg>
          95 kB
        </button>
        <div className="absolute inset-x-0 bottom-0 flex h-7 items-end justify-end bg-gradient-to-t from-[#85898c] to-transparent px-[5px] pb-0.5 text-[10px] leading-4 text-white">
          <time>10:33 am</time>
        </div>
      </div>
    </Bubble>
  );
}

function VoiceMessage() {
  return (
    <Bubble tail className="mt-3 flex h-[67px] w-[336px] items-center pr-2.5 pl-[21px]">
      <button type="button" aria-label="Play" className="mb-2 text-[#9b8d8c]">
        <svg viewBox="0 0 20 22" className="h-[22px] w-5" fill="currentColor" aria-hidden="true">
          <path d="M1 2Q1 0 3 1L18 10Q20 11 18 12L3 21Q1 22 1 20z" />
        </svg>
      </button>
      <div className="ml-[19px] flex flex-1 flex-col pt-[18px]">
        <input
          type="range"
          aria-label="Position"
          defaultValue={0}
          className="h-[13px] w-full appearance-none bg-[linear-gradient(#e6e6e6,#e6e6e6)] bg-[length:100%_3px] bg-center bg-no-repeat [&::-webkit-slider-thumb]:h-[13px] [&::-webkit-slider-thumb]:w-[13px] [&::-webkit-slider-thumb]:appearance-none [&::-webkit-slider-thumb]:rounded-full [&::-webkit-slider-thumb]:bg-[#4bd980]"
        />
        <div className="mt-3 flex justify-between text-[10px] leading-4 text-[#667781]">
          <span className="text-[#8696a0]">0:10</span>
          <time>5:12 am</time>
        </div>
      </div>
      <div className="relative ml-[19px] shrink-0">
        <Avatar className="h-[55px] w-[55px]" />
        <svg viewBox="0 0 16 24" className="absolute -bottom-0.5 left-[3px] h-6 w-4" aria-hidden="true">
          <rect x="3" y="1" width="8" height="16" rx="4" fill="#fff" />
          <rect x="4" y="3" width="6" height="13" rx="2" fill="#06d755" />
          <path d="M2 13q0 6 5 6t5-6M7 19v4" fill="none" stroke="#06d755" strokeWidth="1.500" />
        </svg>
      </div>
    </Bubble>
  );
}

function Composer() {
  return (
    <footer className="flex h-[50px] shrink-0 items-start overflow-hidden bg-[#f0f2f5] pt-2 text-[#54656f]">
      <button type="button" aria-label="Attach" className="flex h-[46px] w-11 items-center justify-center text-[#3b4a54]">
        <svg viewBox="0 0 20 20" className="h-5 w-5" fill="none" stroke="currentColor" strokeWidth="2" aria-hidden="true">
          <path d="M10 1v18M1 10h18" />
        </svg>
      </button>
      <div className="ml-1.5 flex h-[43px] flex-1 items-center rounded-lg bg-white pr-[18px] pl-[13px]">
        <button type="button" aria-label="Stickers">
          <svg viewBox="0 0 24 24" className="h-6 w-6" fill="none" stroke="currentColor" strokeWidth="2" aria-hidden="true">
            <path d="M21 12V9Q21 3 15 3H9Q3 3 3 9v6Q3 21 9 21H13L21 13zM13 21V17Q13 14 16 14H21" />
            <circle cx="8.500" cy="9" r="1.500" fill="currentColor" stroke="none" />
            <circle cx="15.500" cy="9" r="1.500" fill="currentColor" stroke="none" />
            <path d="M7 13h10l-4 3Q9 17 7 13z" fill="currentColor" stroke="none" />
          </svg>
        </button>
        <input
          type="text"
          aria-label="Message"
          placeholder="Type a message"
          className="ml-3.5 min-w-0 flex-1 bg-transparent text-sm outline-none placeholder:text-[#54656f]"
        />
        <span className="h-1.5 w-1.5 rounded-full bg-[#008069]" />
      </div>
      <button type="button" aria-label="Record voice message" className="mr-5 ml-4 flex h-[46px] items-center">
        <svg viewBox="0 0 24 24" className="h-6 w-6" fill="currentColor" aria-hidden="true">
          <path d="M12 14.900c2 0 3.500-1.500 3.500-3.500V4.300c0-2-1.500-3.500-3.500-3.500S8.500 2.300 8.500 4.300v7.100c0 2 1.500 3.500 3.500 3.500zm6.200-3.500c0 3.500-2.900 6-6.200 6s-6.200-2.500-6.200-6h-2c0 4 3.200 7.300 7 7.900v3.900h2.400v-3.900c3.900-.6 7-3.900 7-7.900h-2z" />
        </svg>
      </button>
    </footer>
  );
}

export default function App() {
  return (
    <div className="flex h-screen flex-col overflow-hidden font-['Noto_Sans','DejaVu_Sans',sans-serif]">
      <Header />
      <main className="relative min-h-0 flex-1 overflow-hidden bg-[#7acba5]">
        <Wallpaper />
        <div className="relative flex h-full flex-col justify-end pr-[69px] pb-5 pl-[49px]">
          <PhotoMessage />
          <Bubble out tail className="mt-3 min-w-[234px]">
            <div className="p-[3px] pb-0">
              <Quote className="h-[58px] pt-[7px]">
                <span className="flex items-center gap-1">
                  <svg viewBox="0 0 14 12" className="h-3 w-3.5" aria-hidden="true">
                    <path fill="#8696a0" d="M1 1h3l1-1h4l1 1h3q1 0 1 1v9q0 1-1 1H1q-1 0-1-1V2q0-1 1-1z" />
                    <circle cx="7" cy="6" r="2.500" fill="none" stroke="#d1f4cc" />
                  </svg>
                  Photo
                </span>
              </Quote>
            </div>
            <Line text="تمام شكرا لحضرتك" time="10:34 am" read />
          </Bubble>
          <Bubble tail className="mt-3 min-w-[442px]">
            <Line text="اسفين لو كنا سببنا لكم اى ازعاج الفتره اللى فات ولكم جزيل الشكر" time="10:35 am" />
          </Bubble>
          <Bubble out tail className="mt-3 min-w-[378px]">
            <div className="p-[3px] pb-0">
              <Quote className="h-[54px] pt-[5px]">
                <p dir="rtl" className="truncate">
                  اسفين لو كنا سببنا لكم اى ازعاج الفتره اللى فات ولكم جزيل الشكر
                </p>
              </Quote>
            </div>
            <Line text="العفو بالتوفيق" time="10:35 am" read />
          </Bubble>
          <Day>MONDAY</Day>
          <VoiceMessage />
          <Bubble out tail className="mt-3 min-w-[393px]">
            <Line text="صباح الخير شهادات البرامج جاهزه تمام برسلها لحضرتك" time="9:57 am" read />
          </Bubble>
          <Day>TUESDAY</Day>
          <Bubble tail className="mt-3 min-w-[187px]">
            <Line text="هترسليها بريد ولا ازاى" time="7:41 pm" />
          </Bubble>
          <Bubble className="mt-0.5 min-w-[269px]">
            <Line text="لو سمحتى هتبقى فيه شهاده حضور" time="7:41 pm" />
          </Bubble>
          <Bubble out tail className="mt-3 min-w-[237px]">
            <Line text="اه بكره برسلها لحضرتك pdf" time="8:01 pm" read />
          </Bubble>
        </div>
        <div className="absolute top-[534px] right-0 h-[241px] w-1 bg-black/20" />
        <div className="absolute top-1.5 right-0 h-1 w-1 bg-black/20 [clip-path:polygon(0_100%,100%_0,100%_100%)]" />
        <div className="absolute right-0 bottom-1.5 h-1 w-1 bg-black/20 [clip-path:polygon(0_0,100%_0,100%_100%)]" />
      </main>
      <Composer />
    </div>
  );
}
